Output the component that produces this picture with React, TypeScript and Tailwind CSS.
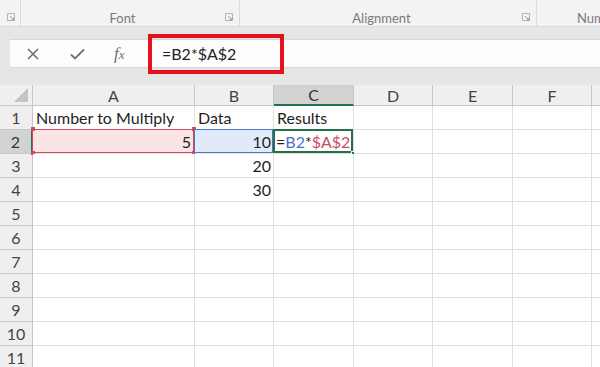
import React from "react";

const cols = [
  { key: "", w: 33 },
  { key: "A", w: 162 },
  { key: "B", w: 79 },
  { key: "C", w: 80 },
  { key: "D", w: 79 },
  { key: "E", w: 80 },
  { key: "F", w: 79 },
  { key: "G", w: 80 },
];

const font = { fontFamily: "Lato, 'Open Sans', sans-serif" };

function Launcher() {
  return (
    <svg width="9" height="9" viewBox="0 0 9 9" className="shrink-0">
      <path d="M0.5 0.5H7.5V7.5H0.5Z" fill="none" stroke="#b5b5b5" strokeWidth="1" />
      <path d="M3 3L7 7M7 4.5V7H4.5" fill="none" stroke="#9a9a9a" strokeWidth="1" />
    </svg>
  );
}

function Cell({ r, c }: { r: number; c: number }) {
  const base = "relative h-[24px] border-r border-b border-[#e0e0e0] text-[16px] leading-[24px] text-[#1e1e1e] whitespace-nowrap";
  if (c === 0) {
    const sel = r === 2;
    return (
      <div
        className={
          sel
            ? "h-[24px] border-b border-[#c6c6c6] bg-[#d2d2d2] border-r-2 border-r-[#217346] text-center text-[16px] leading-[24px] text-[#333]"
            : "h-[24px] border-r border-b border-[#c6c6c6] bg-[#efefef] text-center text-[16px] leading-[24px] text-[#444]"
        }
      >
        {r}
      </div>
    );
  }
  if (r === 1) {
    const t = c === 1 ? "Number to Multiply" : c === 2 ? "Data" : c === 3 ? "Results" : "";
    return <div className={base + " bg-white pl-[3px]"}>{t}</div>;
  }
  if (r === 2 && c === 1) {
    return (
      <div className={base + " bg-[#fbe4e5] text-right pr-[3px]"}>
        5
        <div className="absolute -left-[1px] -top-[1px] right-0 bottom-0 border-[1.5px] border-[#d2495a]" />
        <div className="absolute -left-[2px] -top-[3px] w-[4px] h-[4px] bg-[#d2495a]" />
        <div className="absolute -right-[2px] -top-[3px] w-[4px] h-[4px] bg-[#d2495a]" />
        <div className="absolute -left-[2px] -bottom-[2px] w-[4px] h-[4px] bg-[#d2495a]" />
        <div className="absolute -right-[2px] -bottom-[2px] w-[4px] h-[4px] bg-[#d2495a]" />
      </div>
    );
  }
  if (r === 2 && c === 2) {
    return (
      <div className={base + " bg-[#e0eaf8] text-right pr-[2px]"}>
        10
        <div className="absolute -left-[1px] -top-[1px] right-0 bottom-0 border-[1.5px] border-[#4a75c8]" />
      </div>
    );
  }
  if (r === 2 && c === 3) {
    return (
      <div className={base + " bg-white pl-[2px]"}>
        <span>=</span>
        <span className="text-[#4a72c4]">B2</span>
        <span>*</span>
        <span className="text-[#cc4a63]">$A$2</span>
        <div className="absolute -left-[1px] -top-[1px] right-0 bottom-0 border-2 border-[#217346]" />
        <div className="absolute -right-[3px] -bottom-[3px] w-[5px] h-[5px] bg-[#217346] border border-white" />
      </div>
    );
  }
  if (c === 2 && (r === 3 || r === 4)) {
    return <div className={base + " bg-white text-right pr-[2px]"}>{r === 3 ? "20" : "30"}</div>;
  }
  return <div className={base + " bg-white"} />;
}

export default function App() {
  const rows = [1, 2, 3, 4, 5, 6, 7, 8, 9, 10, 11];
  return (
    <div className="w-[600px] h-[367px] overflow-hidden bg-[#e6e6e6] relative" style={font}>
      {/* Ribbon */}
      <div className="h-[27px] bg-[#f3f3f3] border-b border-[#dcdcdc] flex text-[13px] leading-[16px] text-[#7a7a7a] whitespace-nowrap">
        <div className="w-[21px] shrink-0 border-r border-[#dadada] flex items-end justify-start pl-[7px] pb-[4px]">
          <Launcher />
        </div>
        <div className="w-[219px] shrink-0 border-r border-[#dadada] flex items-end">
          <div className="w-[200px] text-center pl-[3px]">Font</div>
          <div className="pl-[4px] pb-[4px]"><Launcher /></div>
        </div>
        <div className="w-[297px] shrink-0 border-r border-[#dadada] flex items-end">
          <div className="w-[280px] text-center pl-[3px]">Alignment</div>
          <div className="pl-[2px] pb-[4px]"><Launcher /></div>
        </div>
        <div className="flex-1 flex items-end pl-[40px]">Num</div>
      </div>

      {/* Formula bar */}
      <div className="h-[57px] pt-[12px] pl-[10px]">
        <div className="h-[29px] bg-[#fdfdfd] border-y border-[#d8d8d8] flex items-center">
          <div className="w-[138px] flex items-center">
            <svg width="12" height="12" viewBox="0 0 12 12" className="ml-[17px]">
              <path d="M1 1L11 11M11 1L1 11" stroke="#707070" strokeWidth="1.6" />
            </svg>
            <svg width="15" height="12" viewBox="0 0 15 12" className="ml-[31px]">
              <path d="M1 6.5L5 10.5L14 1.5" fill="none" stroke="#707070" strokeWidth="1.8" />
            </svg>
            <span
              className="ml-[29px] text-[17px] italic text-[#707070] leading-none"
              style={{ fontFamily: "'Liberation Serif', serif" }}
            >
              f<span className="text-[13px]">x</span>
            </span>
          </div>
          <div className="pl-[14px] text-[16px] text-[#222]">=B2*$A$2</div>
        </div>
      </div>
      {/* red annotation */}
      <div className="absolute left-[148px] top-[34px] w-[136px] h-[40px] border-[4px] border-[#e4121c]" />

      {/* Grid */}
      <div className="pt-[1px]">
        <div className="grid grid-cols-[33px_162px_79px_80px_79px_80px_79px_80px]">
          {cols.map((c, i) =>
            i === 0 ? (
              <div key={i} className="h-[21px] bg-[#efefef] border-r border-b border-[#c6c6c6] relative">
                <svg width="14" height="14" viewBox="0 0 14 14" className="absolute right-[4px] bottom-[3px]">
                  <path d="M14 0V14H0Z" fill="#c4c4c4" />
                </svg>
              </div>
            ) : (
              <div
                key={i}
                className={
                  c.key === "C"
                    ? "h-[21px] bg-[#d2d2d2] border-r border-[#c6c6c6] border-b-2 border-b-[#217346] text-center text-[16px] leading-[20px] text-[#333]"
                    : "h-[21px] bg-[#efefef] border-r border-b border-[#c6c6c6] text-center text-[16px] leading-[21px] text-[#444]"
                }
              >
                {c.key}
              </div>
            )
          )}
          {rows.map((r) => cols.map((_, c) => <Cell key={r + "-" + c} r={r} c={c} />))}
        </div>
      </div>
    </div>
  );
}
